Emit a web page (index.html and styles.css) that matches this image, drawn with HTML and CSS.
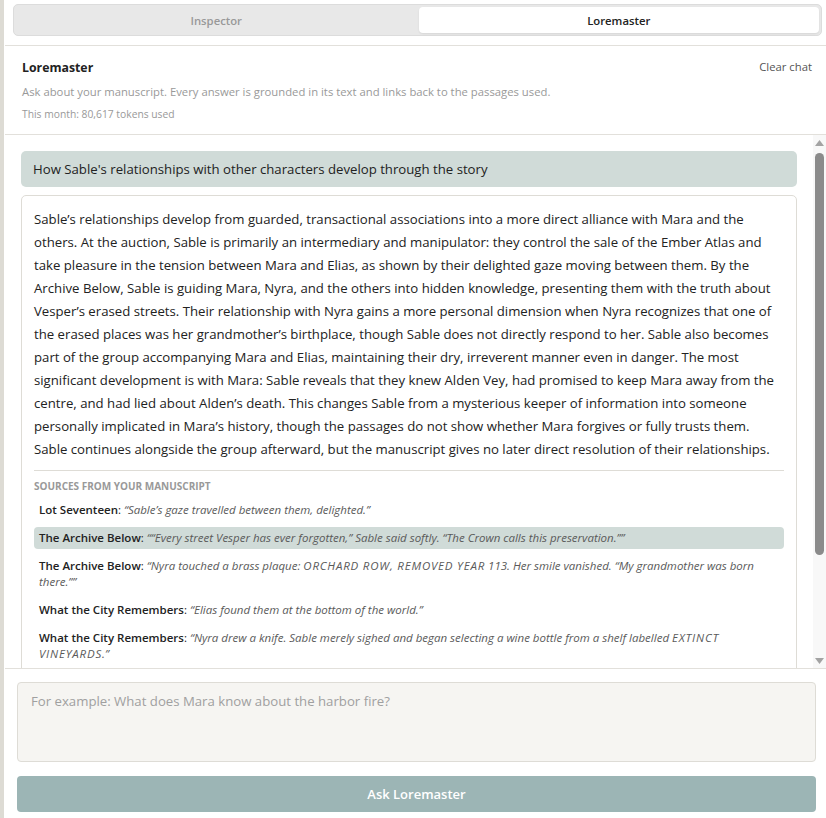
FILE: index.html
```html
<!DOCTYPE html>
<html lang="en">
<head>
<meta charset="utf-8">
<title>Loremaster</title>
<link rel="stylesheet" href="styles.css">
</head>
<body>
<div class="app">
  <div class="panel">
    <div class="tabs-wrap">
      <div class="tabs">
        <button class="tab">Inspector</button>
        <button class="tab active">Loremaster</button>
      </div>
    </div>
    <header class="head">
      <div class="head-top">
        <h1 class="title">Loremaster</h1>
        <button class="clear">Clear chat</button>
      </div>
      <p class="sub">Ask about your manuscript. Every answer is grounded in its text and links back to the passages used.</p>
      <p class="usage">This month: 80,617 tokens used</p>
    </header>
    <div class="chat-wrap">
      <main class="chat">
        <div class="question">How Sable's relationships with other characters develop through the story</div>
        <div class="answer">
          <p class="answer-text">Sable’s relationships develop from guarded, transactional associations into a more direct alliance with Mara and the others. At the auction, Sable is primarily an intermediary and manipulator: they control the sale of the Ember Atlas and take pleasure in the tension between Mara and Elias, as shown by their delighted gaze moving between them. By the Archive Below, Sable is guiding Mara, Nyra, and the others into hidden knowledge, presenting them with the truth about Vesper’s erased streets. Their relationship with Nyra gains a more personal dimension when Nyra recognizes that one of the erased places was her grandmother’s birthplace, though Sable does not directly respond to her. Sable also becomes part of the group accompanying Mara and Elias, maintaining their dry, irreverent manner even in danger. The most significant development is with Mara: Sable reveals that they knew Alden Vey, had promised to keep Mara away from the centre, and had lied about Alden’s death. This changes Sable from a mysterious keeper of information into someone personally implicated in Mara’s history, though the passages do not show whether Mara forgives or fully trusts them. Sable continues alongside the group afterward, but the manuscript gives no later direct resolution of their relationships.</p>
          <div class="sources">
            <div class="sources-title">Sources from your manuscript</div>
            <ul class="source-list">
              <li class="source"><b>Lot Seventeen</b>: <i>“Sable’s gaze travelled between them, delighted.”</i></li>
              <li class="source on"><b>The Archive Below</b>: <i>““Every street Vesper has ever forgotten,” Sable said softly. “The Crown calls this preservation.””</i></li>
              <li class="source"><b>The Archive Below</b>: <i>“Nyra touched a brass plaque: <span class="caps">ORCHARD ROW, REMOVED YEAR</span> 113. Her smile vanished. “My grandmother was born there.””</i></li>
              <li class="source"><b>What the City Remembers</b>: <i>“Elias found them at the bottom of the world.”</i></li>
              <li class="source"><b>What the City Remembers</b>: <i>“Nyra drew a knife. Sable merely sighed and began selecting a wine bottle from a shelf labelled <span class="caps">EXTINCT VINEYARDS</span>.”</i></li>
            </ul>
          </div>
        </div>
      </main>
      <div class="scrollbar" aria-hidden="true">
        <svg class="arrow" width="9" height="6" viewBox="0 0 9 6"><path d="M0 6 L4.5 0 L9 6 Z" fill="#a3a3a3"/></svg>
        <div class="thumb"></div>
        <div class="track-rest"></div>
        <svg class="arrow" width="9" height="6" viewBox="0 0 9 6"><path d="M0 0 L4.5 6 L9 0 Z" fill="#a3a3a3"/></svg>
      </div>
    </div>
    <footer class="compose">
      <textarea class="input" placeholder="For example: What does Mara know about the harbor fire?"></textarea>
      <button class="ask">Ask Loremaster</button>
    </footer>
  </div>
</div>
</body>
</html>
```
FILE: styles.css
```css
* { box-sizing: border-box; }
html, body { margin: 0; height: 100%; }
body {
  font-family: "Open Sans", "Noto Sans", "Liberation Sans", sans-serif;
  color: #222;
  background: #fff;
  overflow: hidden;
}
.app {
  height: 100vh;
  display: flex;
  border-left: 4px solid #dddbd4;
}
.panel {
  flex: 1;
  display: flex;
  flex-direction: column;
  min-width: 0;
  border-left: 1px solid #fff;
}
.tabs-wrap {
  padding: 4px 4px 9px 8px;
  border-bottom: 1px solid #e2e0db;
}
.tabs {
  display: flex;
  gap: 2px;
  padding: 2px;
  background: #e8e8e8;
  border: 1px solid #dcdcdc;
  border-radius: 5px;
}
.tab {
  flex: 1;
  height: 26px;
  border: 0;
  background: transparent;
  font: 600 11.3px "Open Sans", "Noto Sans", sans-serif;
  color: #999;
  border-radius: 4px;
  padding: 0;
}
.tab.active {
  background: #fff;
  color: #222;
  box-shadow: 0 1px 2px rgba(0,0,0,.08);
}
.head {
  padding: 13px 14px 12px 17px;
  border-bottom: 1px solid #e2e0db;
}
.head-top {
  display: flex;
  justify-content: space-between;
  align-items: flex-start;
}
.title {
  margin: 0;
  font-size: 12.3px;
  font-weight: 700;
  line-height: 18px;
}
.clear {
  border: 0;
  background: none;
  padding: 0;
  font: 11.3px/16px "Open Sans", "Noto Sans", sans-serif;
  color: #555;
}
.sub {
  margin: 7px 0 0;
  font-size: 11.3px;
  line-height: 16px;
  color: #999;
}
.usage {
  margin: 6px 0 0;
  font-size: 10.3px;
  line-height: 16px;
  color: #999;
}
.chat-wrap {
  flex: 1;
  min-height: 0;
  display: flex;
}
.chat {
  flex: 1;
  min-width: 0;
  overflow: hidden;
  padding: 16px;
  display: flex;
  flex-direction: column;
  gap: 8px;
}
.scrollbar {
  flex: none;
  width: 13px;
  background: #f8f8f8;
  display: flex;
  flex-direction: column;
  align-items: center;
  padding: 5px 0 4px;
}
.arrow { flex: none; display: block; }
.thumb {
  flex: none;
  width: 9px;
  height: 402px;
  margin-top: 7px;
  background: #8b8b8b;
  border-radius: 5px;
}
.track-rest { flex: 1; }
.question {
  flex: none;
  background: #d0dbd8;
  border-radius: 5px;
  padding: 7px 12px;
  font-size: 13.2px;
  line-height: 22px;
}
.answer {
  flex: none;
  border: 1px solid #dedcd6;
  border-radius: 5px;
  padding: 12px;
}
.answer-text {
  margin: 0;
  font-size: 13.2px;
  line-height: 23px;
}
.sources {
  margin-top: 9px;
  padding-top: 8px;
  border-top: 1px solid #dedcd6;
}
.sources-title {
  font-size: 10px;
  font-weight: 700;
  text-transform: uppercase;
  color: #999;
  line-height: 14px;
}
.source-list {
  list-style: none;
  margin: 6px 0 0;
  padding: 0;
  display: flex;
  flex-direction: column;
  gap: 6px;
}
.source {
  padding: 3px 5px;
  border-radius: 4px;
  font-size: 11.5px;
  line-height: 16px;
}
.source b { font-weight: 600; color: #222; }
.source i { color: #5a5a5a; }
.source .caps { letter-spacing: 0.8px; }
.source.on { background: #d0dbd8; }
.compose {
  border-top: 1px solid #e2e0db;
  padding: 13px 10px 6px 12px;
  display: flex;
  flex-direction: column;
  gap: 14px;
}
.input {
  flex: none;
  height: 80px;
  resize: none;
  background: #f6f5f2;
  border: 1px solid #dedcd6;
  border-radius: 4px;
  padding: 8px 13px;
  font: 13.2px/20px "Open Sans", "Noto Sans", sans-serif;
  color: #222;
}
.input::placeholder { color: #a0a0a0; }
.ask {
  flex: none;
  height: 36px;
  border: 0;
  border-radius: 4px;
  background: #9cb5b5;
  color: #fff;
  font: 600 13px "Open Sans", "Noto Sans", sans-serif;
}
```
